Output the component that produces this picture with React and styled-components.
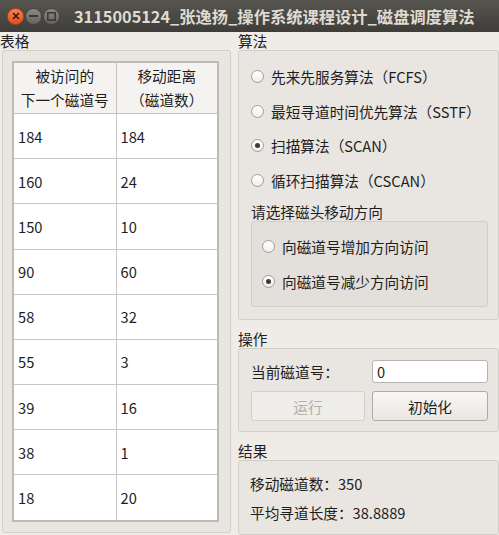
import React from 'react';
import styled, { createGlobalStyle } from 'styled-components';

const Global = createGlobalStyle`
  html, body { margin: 0; padding: 0; background: #efebe7; }
  * { box-sizing: border-box; }
`;

const Window = styled.div`
  width: 499px;
  height: 535px;
  overflow: hidden;
  background: #efebe7;
  font-family: "Noto Sans CJK SC", "Noto Sans", sans-serif;
  font-size: 14.67px;
  color: #1e1e1e;
  display: flex;
  flex-direction: column;
`;

const TitleBar = styled.div`
  height: 32px;
  flex: none;
  display: flex;
  align-items: center;
  padding-left: 7px;
  background: linear-gradient(#56554f, #3e3d39);
`;

const WinButton = styled.div`
  width: 17px;
  height: 17px;
  border-radius: 50%;
  margin-right: 1px;
  display: flex;
  align-items: center;
  justify-content: center;
  background: ${p => (p.close ? 'linear-gradient(#f58455, #e0501c)' : 'linear-gradient(#8a8984, #65645f)')};
  border: 1px solid ${p => (p.close ? '#b8431a' : '#44433f')};
`;

const Caption = styled.div`
  margin-left: 13px;
  color: #dfdbd2;
  font-weight: bold;
  font-size: 16.3px;
  white-space: nowrap;
`;

const Main = styled.div`
  flex: 1;
  display: flex;
  gap: 7px;
  min-height: 0;
`;

const Column = styled.div`
  width: ${p => p.w}px;
  flex: none;
  display: flex;
  flex-direction: column;
`;

const GroupTitle = styled.div`
  height: 18px;
  line-height: 18px;
  white-space: nowrap;
`;

const Frame = styled.div`
  border: 1px solid #d2cec8;
  border-radius: 3px;
  background: rgba(0, 0, 0, 0.022);
  height: ${p => (p.h ? `${p.h}px` : 'auto')};
  flex: ${p => (p.grow ? 1 : 'none')};
  margin-left: ${p => p.ml || 0}px;
  padding: ${p => p.pad};
`;

const Table = styled.table`
  width: 100%;
  height: 100%;
  border-collapse: collapse;
  table-layout: fixed;
  background: #fff;
  border: 2px solid #bebbb6;
`;

const Th = styled.th`
  height: 50px;
  font-weight: normal;
  line-height: 24px;
  background: #f5f3f1;
  border: 1px solid #c6c3bf;
  width: ${p => (p.w ? `${p.w}px` : 'auto')};
`;

const Td = styled.td`
  border: 1px solid #c8c8c8;
  padding-left: 4px;
`;

const RadioRow = styled.label`
  height: ${p => p.h}px;
  display: flex;
  align-items: center;
  gap: 7px;
  white-space: nowrap;
`;

const Circle = styled.span`
  width: 13px;
  height: 13px;
  flex: none;
  border-radius: 50%;
  border: 1px solid #a09d98;
  background: linear-gradient(#ffffff, #f1efed);
  display: flex;
  align-items: center;
  justify-content: center;
  &::after {
    content: '';
    width: 5px;
    height: 5px;
    border-radius: 50%;
    background: ${p => (p.checked ? '#3c3c3c' : 'transparent')};
  }
`;

const Spacer = styled.div`
  height: ${p => p.h}px;
  flex: none;
`;

const OpGrid = styled.div`
  display: grid;
  grid-template-columns: 114px 1fr;
  grid-template-rows: 23px 30px;
  column-gap: 7px;
  row-gap: 8px;
`;

const FieldLabel = styled.div`
  display: flex;
  align-items: center;
  white-space: nowrap;
`;

const Input = styled.div`
  border: 1px solid #b7b3ad;
  border-radius: 3px;
  background: #fff;
  padding-left: 4px;
  display: flex;
  align-items: center;
`;

const Button = styled.div`
  border: 1px solid ${p => (p.disabled ? '#d3d0cb' : '#aeaaa4')};
  border-radius: 3px;
  background: ${p => (p.disabled ? '#efedea' : 'linear-gradient(#f8f7f6, #e9e7e3)')};
  color: ${p => (p.disabled ? '#b2aea8' : '#1e1e1e')};
  display: flex;
  align-items: center;
  justify-content: center;
`;

const ResultLine = styled.div`
  height: 29px;
  display: flex;
  align-items: center;
  white-space: nowrap;
`;

const rows = [
  [184, 184], [160, 24], [150, 10], [90, 60], [58, 32],
  [55, 3], [39, 16], [38, 1], [18, 20],
];

const algos = [
  ['先来先服务算法（FCFS）', false],
  ['最短寻道时间优先算法（SSTF）', false],
  ['扫描算法（SCAN）', true],
  ['循环扫描算法（CSCAN）', false],
];

export default function App() {
  return (
    <Window>
      <Global />
      <TitleBar>
        <WinButton close>
          <svg width="8" height="8" viewBox="0 0 8 8">
            <path d="M1 1L7 7M7 1L1 7" stroke="#3a1a0c" strokeWidth="1.6" />
          </svg>
        </WinButton>
        <WinButton>
          <svg width="9" height="2" viewBox="0 0 9 2">
            <rect width="9" height="2" fill="#3c3b37" />
          </svg>
        </WinButton>
        <WinButton>
          <svg width="9" height="9" viewBox="0 0 9 9">
            <rect x="0.8" y="0.8" width="7.4" height="7.4" fill="none" stroke="#3c3b37" strokeWidth="1.6" />
          </svg>
        </WinButton>
        <Caption>3115005124_张逸扬_操作系统课程设计_磁盘调度算法</Caption>
      </TitleBar>
      <Main>
        <Column w={231}>
          <GroupTitle>表格</GroupTitle>
          <Frame h={483} ml={2} pad="10px 11px 10px 9px">
            <Table>
              <thead>
                <tr>
                  <Th w={103}>被访问的<br />下一个磁道号</Th>
                  <Th>移动距离<br />（磁道数）</Th>
                </tr>
              </thead>
              <tbody>
                {rows.map(([a, b], i) => (
                  <tr key={i}>
                    <Td>{a}</Td>
                    <Td>{b}</Td>
                  </tr>
                ))}
              </tbody>
            </Table>
          </Frame>
        </Column>
        <Column w={261}>
          <GroupTitle>算法</GroupTitle>
          <Frame h={270} pad="8px 10px 0 12px">
            {algos.map(([t, c]) => (
              <RadioRow key={t} h={34.8}>
                <Circle checked={c} />
                {t}
              </RadioRow>
            ))}
            <Spacer h={5} />
            <GroupTitle>请选择磁头移动方向</GroupTitle>
            <Frame h={86} pad="7px 0 0 10px">
              <RadioRow h={35}>
                <Circle />
                向磁道号增加方向访问
              </RadioRow>
              <RadioRow h={35}>
                <Circle checked />
                向磁道号减少方向访问
              </RadioRow>
            </Frame>
          </Frame>
          <Spacer h={10} />
          <GroupTitle>操作</GroupTitle>
          <Frame h={84} pad="11px 10px 0 12px">
            <OpGrid>
              <FieldLabel>当前磁道号：</FieldLabel>
              <Input>0</Input>
              <Button disabled>运行</Button>
              <Button>初始化</Button>
            </OpGrid>
          </Frame>
          <Spacer h={10} />
          <GroupTitle>结果</GroupTitle>
          <Frame grow pad="8px 10px 0 11px">
            <ResultLine>移动磁道数：350</ResultLine>
            <ResultLine>平均寻道长度：38.8889</ResultLine>
          </Frame>
        </Column>
      </Main>
    </Window>
  );
}
